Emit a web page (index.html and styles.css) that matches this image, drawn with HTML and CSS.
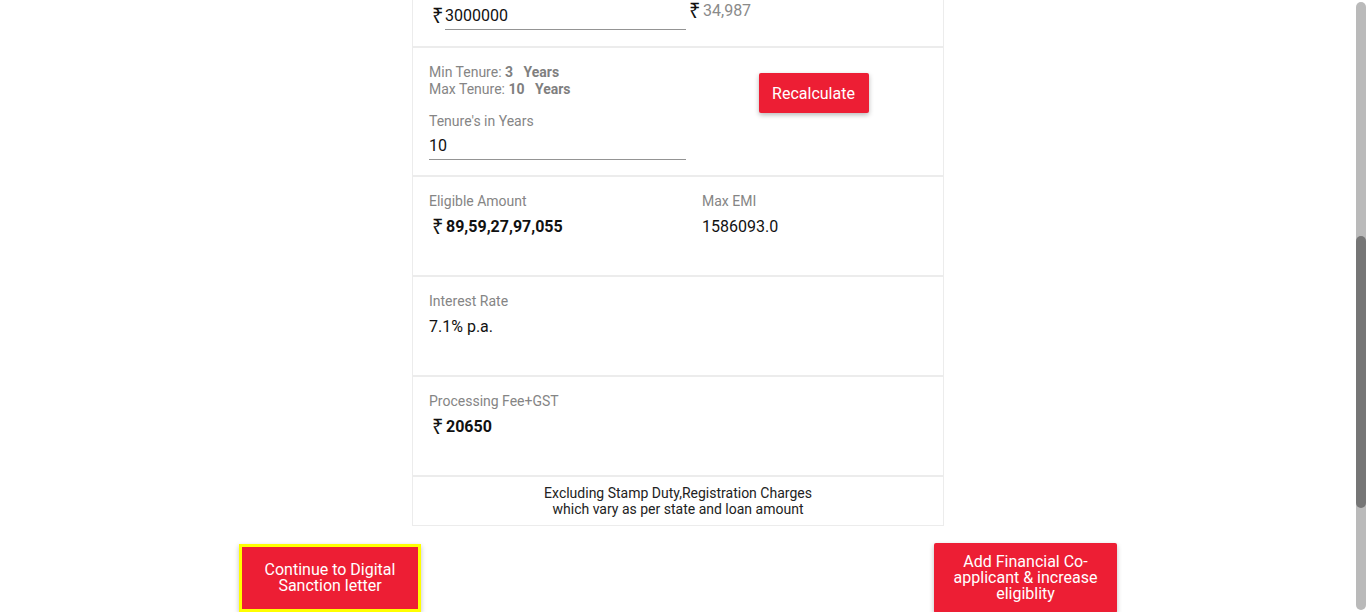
FILE: index.html
```html
<!DOCTYPE html>
<html lang="en">
<head>
<meta charset="utf-8">
<title>Loan Eligibility</title>
<link rel="stylesheet" href="styles.css">
</head>
<body>
<main class="page">
  <section class="card">
    <div class="box box-amount">
      <div class="col">
        <div class="field field-money"><span class="rs rs-out">₹</span><span class="field-line">3000000</span></div>
      </div>
      <div class="col col-emi">
        <div class="emi"><span class="rs">₹</span>34,987</div>
      </div>
    </div>

    <div class="box box-tenure">
      <div class="col">
        <div class="range">Min Tenure: <b>3</b>&nbsp;&nbsp; <b>Years</b></div>
        <div class="range">Max Tenure: <b>10</b>&nbsp;&nbsp; <b>Years</b></div>
        <div class="lbl lbl-tenure">Tenure's in Years</div>
        <div class="field"><span class="field-line">10</span></div>
      </div>
      <div class="col col-btn">
        <button class="btn btn-recalc">Recalculate</button>
      </div>
    </div>

    <div class="box box-info">
      <div class="col">
        <div class="lbl">Eligible Amount</div>
        <div class="val val-bold"><span class="rs">₹</span>89,59,27,97,055</div>
      </div>
      <div class="col">
        <div class="lbl">Max EMI</div>
        <div class="val">1586093.0</div>
      </div>
    </div>

    <div class="box box-info">
      <div class="col">
        <div class="lbl">Interest Rate</div>
        <div class="val">7.1% p.a.</div>
      </div>
    </div>

    <div class="box box-info">
      <div class="col">
        <div class="lbl">Processing Fee+GST</div>
        <div class="val val-bold"><span class="rs">₹</span>20650</div>
      </div>
    </div>

    <div class="box box-note">
      Excluding Stamp Duty,Registration Charges<br>which vary as per state and loan amount
    </div>
  </section>

  <div class="actions">
    <button class="btn btn-big btn-focus">Continue to Digital<br>Sanction letter</button>
    <button class="btn btn-big btn-add">Add Financial Co-<br>applicant &amp; increase<br>eligiblity</button>
  </div>
</main>

<div class="scrollbar" aria-hidden="true"><div class="scrollbar-thumb"></div></div>
</body>
</html>
```

FILE: styles.css
```css
* { box-sizing: border-box; }

html, body {
  margin: 0;
  padding: 0;
  background: #ffffff;
  overflow: hidden;
}

body {
  font-family: Roboto, "Noto Sans", "Liberation Sans", sans-serif;
  color: #111;
  height: 612px;
}

.page {
  width: 1356px;
  display: flex;
  flex-direction: column;
  align-items: center;
}

.card {
  width: 532px;
  margin-top: -1px;
  display: flex;
  flex-direction: column;
}

.box {
  border: 1px solid #ececec;
  display: grid;
  grid-template-columns: 257px 1fr;
  column-gap: 16px;
  padding: 0 16px;
}

.col { display: flex; flex-direction: column; min-width: 0; }

.lbl {
  font-size: 14px;
  line-height: 20px;
  color: #858585;
}

.rs {
  display: inline-block;
  width: 17px;
  padding-left: 3px;
  font-family: "Noto Sans", Roboto, sans-serif;
  font-weight: 400;
  font-size: 20px;
  line-height: 20px;
  color: #111;
  vertical-align: top;
}

/* box 1 */
.box-amount { padding-top: 6px; padding-bottom: 16px; }

.field {
  margin-top: 6px;
  display: flex;
  align-items: flex-end;
}
.box-amount .field { margin-top: 0; }

.field-line {
  flex: 1;
  font-size: 16px;
  line-height: 20px;
  padding-bottom: 3px;
  border-bottom: 1px solid #949494;
  color: #111;
}

.field-money .rs-out {
  width: 16px;
  padding-bottom: 4px;
}

.col-emi { margin-left: -13px; margin-top: -5px; }

.emi {
  font-size: 16px;
  line-height: 20px;
  color: #8a8a8a;
}
.emi .rs { width: 14px; padding-left: 0; }

/* box 2 */
.box-tenure { padding-top: 16px; padding-bottom: 15px; }

.range {
  font-size: 14px;
  line-height: 17px;
  color: #858585;
}
.range b { font-weight: 700; color: #7f7f7f; }

.lbl-tenure { margin-top: 13px; }
.box-tenure .field { margin-top: 5px; }

.col-btn { align-items: center; }

.btn {
  font-family: Roboto, "Noto Sans", sans-serif;
  background: #ed1e34;
  color: #fff;
  border: none;
  cursor: pointer;
}

.btn-recalc {
  margin-top: 9px;
  margin-left: -2px;
  width: 110px;
  height: 40px;
  font-size: 16px;
  padding: 0;
  border-radius: 2px;
  box-shadow: 0 2px 5px rgba(0, 0, 0, 0.28);
}

/* info boxes */
.box-info {
  height: 100px;
  padding-top: 14px;
}
.val {
  margin-top: 6px;
  font-size: 16px;
  line-height: 20px;
  color: #111;
}
.val-bold { font-weight: 700; }

.box-note {
  display: block;
  height: 50px;
  padding-top: 8px;
  text-align: center;
  font-size: 14px;
  line-height: 16px;
  color: #222;
}

/* actions */
.actions {
  width: 878px;
  margin-top: 17px;
  height: 70px;
  display: flex;
  justify-content: space-between;
  align-items: center;
}

.btn-big {
  font-size: 16px;
  line-height: 16px;
  text-align: center;
  padding: 0;
  border-radius: 2px;
  box-shadow: 0 2px 5px rgba(0, 0, 0, 0.25);
}

.btn-focus {
  width: 182px;
  height: 68px;
  border: 3px solid #ffff00;
  border-radius: 0;
}

.btn-add {
  width: 183px;
  height: 70px;
}

/* fake scrollbar (overlay) */
.scrollbar {
  position: fixed;
  top: 2px;
  bottom: 2px;
  right: 0;
  width: 10px;
  background: #bababa;
  border-radius: 5px;
}
.scrollbar-thumb {
  position: absolute;
  left: 0;
  right: 0;
  top: 234px;
  height: 272px;
  background: #767676;
  border-radius: 5px;
}
```
